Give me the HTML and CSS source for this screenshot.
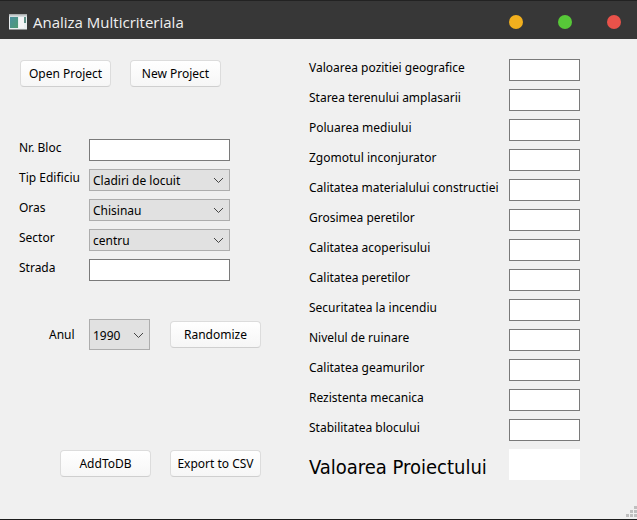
FILE: index.html
```html
<!DOCTYPE html>
<html lang="ro">
<head>
<meta charset="utf-8">
<title>Analiza Multicriteriala</title>
<link rel="stylesheet" href="styles.css">
</head>
<body>
<header class="titlebar">
  <svg class="app-icon" width="18" height="16" viewBox="0 0 18 16" aria-hidden="true">
    <defs><linearGradient id="pane" x1="0" y1="0" x2="1" y2="1"><stop offset="0" stop-color="#4a8fa0"/><stop offset="1" stop-color="#4f9a72"/></linearGradient></defs>
    <rect width="18" height="15" y="0.5" fill="#e9eef0"/>
    <rect width="18" height="2" y="0.5" fill="#c3c9cb"/>
    <rect x="1" y="3" width="8" height="11" fill="url(#pane)"/>
    <rect x="10" y="3" width="5" height="11" fill="#f5f5f7"/>
    <rect x="15" y="3" width="2" height="6" fill="#5d8f86"/>
  </svg>
  <h1 class="title">Analiza Multicriteriala</h1>
  <div class="window-controls">
    <button class="dot minimize" aria-label="Minimize"></button>
    <button class="dot maximize" aria-label="Maximize"></button>
    <button class="dot close" aria-label="Close"></button>
  </div>
</header>
<main class="content">
  <section class="project">
    <div class="buttons">
      <button class="button">Open Project</button>
      <button class="button">New Project</button>
    </div>
    <div class="fields">
      <div class="field"><label for="bloc">Nr. Bloc</label><input id="bloc" type="text"></div>
      <div class="field"><label for="tip">Tip Edificiu</label><span class="combo"><select id="tip"><option>Cladiri de locuit</option></select><svg width="11" height="7" viewBox="0 0 11 7"><path d="M1 1l4.500 4.500L10 1"/></svg></span></div>
      <div class="field"><label for="oras">Oras</label><span class="combo"><select id="oras"><option>Chisinau</option></select><svg width="11" height="7" viewBox="0 0 11 7"><path d="M1 1l4.500 4.500L10 1"/></svg></span></div>
      <div class="field"><label for="sector">Sector</label><span class="combo"><select id="sector"><option>centru</option></select><svg width="11" height="7" viewBox="0 0 11 7"><path d="M1 1l4.500 4.500L10 1"/></svg></span></div>
      <div class="field"><label for="strada">Strada</label><input id="strada" type="text"></div>
    </div>
    <div class="year">
      <label for="anul">Anul</label>
      <span class="combo tall"><select id="anul"><option>1990</option></select><svg width="11" height="7" viewBox="0 0 11 7"><path d="M1 1l4.500 4.500L10 1"/></svg></span>
      <button class="button">Randomize</button>
    </div>
    <div class="buttons export">
      <button class="button">AddToDB</button>
      <button class="button">Export to CSV</button>
    </div>
  </section>
  <section class="criteria">
    <div class="field"><label for="c1">Valoarea pozitiei geografice</label><input id="c1" type="text"></div>
    <div class="field"><label for="c2">Starea terenului amplasarii</label><input id="c2" type="text"></div>
    <div class="field"><label for="c3">Poluarea mediului</label><input id="c3" type="text"></div>
    <div class="field"><label for="c4">Zgomotul inconjurator</label><input id="c4" type="text"></div>
    <div class="field"><label for="c5">Calitatea materialului constructiei</label><input id="c5" type="text"></div>
    <div class="field"><label for="c6">Grosimea peretilor</label><input id="c6" type="text"></div>
    <div class="field"><label for="c7">Calitatea acoperisului</label><input id="c7" type="text"></div>
    <div class="field"><label for="c8">Calitatea peretilor</label><input id="c8" type="text"></div>
    <div class="field"><label for="c9">Securitatea la incendiu</label><input id="c9" type="text"></div>
    <div class="field"><label for="c10">Nivelul de ruinare</label><input id="c10" type="text"></div>
    <div class="field"><label for="c11">Calitatea geamurilor</label><input id="c11" type="text"></div>
    <div class="field"><label for="c12">Rezistenta mecanica</label><input id="c12" type="text"></div>
    <div class="field"><label for="c13">Stabilitatea blocului</label><input id="c13" type="text"></div>
    <div class="field total"><label for="total">Valoarea Proiectului</label><input id="total" type="text" readonly></div>
  </section>
  <svg class="grip" width="11" height="11" viewBox="0 0 11 11" aria-hidden="true"><path d="M8 0h3v3h-3zM4 4h3v3h-3zM8 4h3v3h-3zM0 8h3v3h-3zM4 8h3v3h-3zM8 8h3v3h-3z"/></svg>
</main>
</body>
</html>
```

FILE: styles.css
```css
* {
  box-sizing: border-box;
}

body {
  margin: 0;
  min-height: 100vh;
  display: flex;
  flex-direction: column;
  background: #f0f0f0;
  color: #000;
  font: 12px/18px "Noto Sans", sans-serif;
}

.titlebar {
  display: flex;
  align-items: center;
  padding: 4px 16px 0 9px;
  height: 39px;
  background: #373737;
  border-top: 1px solid #222;
}

.title {
  margin: 0 0 0 6px;
  color: #f0f0f0;
  font: 15px/20px "Open Sans", sans-serif;
}

.window-controls {
  display: flex;
  gap: 35px;
  margin-left: auto;
}

.dot {
  width: 14px;
  height: 14px;
  padding: 0;
  border: 0;
  border-radius: 50%;
}

.minimize { background: #f2b01e; }
.maximize { background: #57c838; }
.close { background: #e9524a; }

.content {
  position: relative;
  flex: 1;
  display: flex;
  gap: 48px;
  padding: 20px 20px 38px 19px;
  border-bottom: 1px solid #1c1c1c;
}

.project {
  width: 242px;
}

.buttons {
  display: flex;
  gap: 19px;
  padding: 1px 0 0 1px;
}

.button {
  width: 91px;
  height: 27px;
  padding: 0;
  border: 1px solid #dcdcdc;
  border-bottom-color: #cfcfcf;
  border-radius: 4px;
  background: linear-gradient(#fff, #f6f6f6);
  color: inherit;
  font: inherit;
  white-space: nowrap;
}

.fields {
  margin-top: 52px;
}

.field {
  display: grid;
  grid-template-columns: 70px 141px;
  height: 30px;
}

.field label {
  white-space: nowrap;
}

.criteria .field {
  grid-template-columns: 200px 71px;
}

input {
  width: 100%;
  height: 22px;
  padding: 0 3px;
  border: 1px solid #7a7a7a;
  background: #fff;
  font: inherit;
}

.combo {
  position: relative;
  height: 22px;
}

.combo select {
  width: 100%;
  height: 100%;
  padding: 2px 16px 0 3px;
  border: 1px solid #adadad;
  border-radius: 0;
  background: #e1e1e1;
  color: inherit;
  font: inherit;
  appearance: none;
}

.combo svg {
  position: absolute;
  top: 50%;
  right: 6px;
  margin-top: -3px;
  fill: none;
  stroke: #444;
  pointer-events: none;
}

.year {
  display: flex;
  align-items: center;
  margin-top: 30px;
  padding-left: 30px;
}

.year label {
  width: 40px;
}

.year .combo {
  width: 61px;
  height: 31px;
  margin-right: 20px;
}

.export {
  margin-top: 99px;
  padding-left: 41px;
}

.criteria .total {
  height: 31px;
}

.total label {
  font: 20px/36px "DejaVu Sans Condensed", sans-serif;
}

.total input {
  height: 31px;
  border: 0;
}

.grip {
  position: absolute;
  right: 0;
  bottom: 2px;
  fill: #bfbfbf;
}
```
